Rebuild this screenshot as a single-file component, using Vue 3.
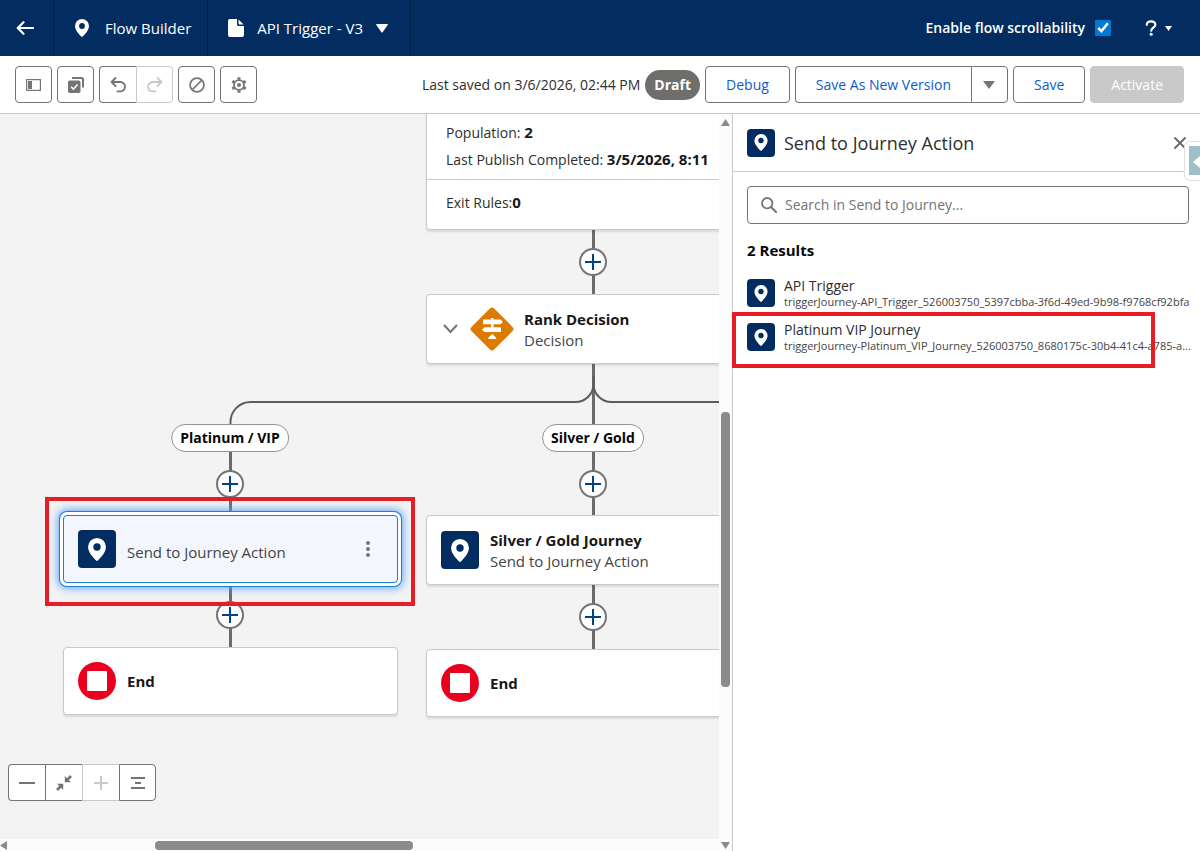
<template>
  <div class="builder">
    <svg class="sprite" aria-hidden="true">
      <symbol id="pin" viewBox="0 0 14 18">
        <path fill-rule="evenodd" d="M7 0a7 7 0 0 0-7 7c0 4.300 4.400 8.600 6.300 10.600.4.500 1 .5 1.400 0C9.600 15.600 14 11.300 14 7a7 7 0 0 0-7-7zm0 9.900a2.900 2.900 0 1 1 0-5.800 2.900 2.900 0 0 1 0 5.800z" />
      </symbol>
    </svg>

    <header class="topbar">
      <a class="topbar-cell back" href="#" aria-label="Back">
        <svg width="18" height="14" viewBox="0 0 18 14"><path d="M17 7H2M7.500 1.200 1.700 7l5.800 5.800" fill="none" stroke="#fff" stroke-width="2.200" stroke-linecap="round" stroke-linejoin="round" /></svg>
      </a>
      <div class="topbar-cell app-name">
        <svg width="14" height="18" fill="#fff"><use href="#pin" /></svg>
        <span>Flow Builder</span>
      </div>
      <button class="topbar-cell flow-name" type="button">
        <svg width="16" height="18" viewBox="0 0 16 18" fill="#fff"><path d="M2 0h7v5.500C9 6.400 9.600 7 10.500 7H16v9a2 2 0 0 1-2 2H2a2 2 0 0 1-2-2V2C0 .9.900 0 2 0z" /><path d="M10.500.5 15.500 5.500h-4a1 1 0 0 1-1-1z" /></svg>
        <span>API Trigger - V3</span>
        <svg width="12" height="9" viewBox="0 0 12 9" fill="#fff"><path d="M.8 0h10.400c.6 0 .9.600.5 1.100L6.600 8.300c-.3.400-.9.400-1.200 0L.3 1.100C-.1.600.2 0 .8 0z" /></svg>
      </button>
      <div class="topbar-right">
        <label class="scroll-toggle">
          Enable flow scrollability
          <input v-model="scrollable" type="checkbox" />
        </label>
        <button class="help" type="button" aria-label="Help">
          <svg width="12" height="16" viewBox="0 0 12 16"><path d="M1.800 4.800C1.800 2.600 3.500 1.300 6 1.300s4.300 1.400 4.300 3.400c0 3-4.100 2.800-4.100 6" fill="none" stroke="#fff" stroke-width="2.200" stroke-linecap="round" /><circle cx="6.200" cy="14.300" r="1.500" fill="#fff" /></svg>
          <svg width="7" height="5" viewBox="0 0 7 5" fill="#fff"><path d="M0 0h7L3.500 5z" /></svg>
        </button>
      </div>
    </header>

    <div class="toolbar">
      <button class="icon-btn" type="button" aria-label="Toggle toolbox">
        <svg width="15" height="12" viewBox="0 0 15 12"><rect x=".6" y=".6" width="13.800" height="10.800" fill="none" stroke="#747474" stroke-width="1.200" /><path d="M2 2h4v8H2z" fill="#747474" /></svg>
      </button>
      <button class="icon-btn" type="button" aria-label="Select elements">
        <svg width="16" height="16" viewBox="0 0 16 16"><path d="M4.500 0h9.300C15 0 16 1 16 2.200v8.300h-2V2.600a.6.600 0 0 0-.6-.6H4V.5c0-.3.200-.5.500-.5z" fill="#747474" /><rect y="3.500" width="12.500" height="12.500" rx="1.800" fill="#747474" /><path d="m3.200 9.900 2.300 2.300 4-4.600" fill="none" stroke="#fff" stroke-width="1.500" /></svg>
      </button>
      <div class="btn-group">
        <button class="icon-btn" type="button" aria-label="Undo">
          <svg width="16" height="16" viewBox="0 0 16 16"><path d="M1.500 5h8.800a4.700 4.700 0 1 1 0 9.400H7.500M5.500 1 1.500 5l4 4" fill="none" stroke="#747474" stroke-width="1.800" stroke-linecap="round" stroke-linejoin="round" /></svg>
        </button>
        <button class="icon-btn" type="button" aria-label="Redo" disabled>
          <svg width="16" height="16" viewBox="0 0 16 16"><path d="M14.500 5H5.700a4.700 4.700 0 1 0 0 9.400h2.800M10.500 1l4 4-4 4" fill="none" stroke="#c9c9c9" stroke-width="1.800" stroke-linecap="round" stroke-linejoin="round" /></svg>
        </button>
      </div>
      <button class="icon-btn" type="button" aria-label="Skip">
        <svg width="16" height="16" viewBox="0 0 16 16"><path d="M3 13 13 3" stroke="#747474" stroke-width="1.700" /><circle cx="8" cy="8" r="6.900" fill="none" stroke="#747474" stroke-width="1.700" /></svg>
      </button>
      <button class="icon-btn" type="button" aria-label="Settings">
        <svg width="16" height="16" viewBox="0 0 16 16" fill="none" stroke="#747474"><path d="M8 .3v2.500M8 13.200v2.500M1.300 4.200l2.200 1.200M12.500 10.600l2.200 1.200M1.300 11.800l2.200-1.200M12.500 5.400l2.200-1.200" stroke-width="3" /><circle cx="8" cy="8" r="4.900" stroke-width="1.800" /><circle cx="8" cy="8" r="2" fill="#747474" stroke="none" /></svg>
      </button>

      <div class="toolbar-right">
        <span>Last saved on 3/6/2026, 02:44 PM</span>
        <span class="badge">Draft</span>
        <button class="btn" type="button">Debug</button>
        <div class="btn-group">
          <button class="btn" type="button">Save As New Version</button>
          <button class="icon-btn" type="button" aria-label="More save options">
            <svg width="12" height="8" viewBox="0 0 12 8" fill="#747474"><path d="M0 0h12L6 8z" /></svg>
          </button>
        </div>
        <button class="btn" type="button">Save</button>
        <button class="btn activate" type="button" disabled>Activate</button>
      </div>
    </div>

    <main class="workspace">
      <section class="canvas-wrap">
        <div class="canvas">
          <svg class="connectors" width="1000" height="640" fill="none">
            <path stroke="#6b6b6b" stroke-width="3" d="M593.500 116v64M593.500 250v285M230.500 330v203" />
            <path stroke="#5c5c5c" stroke-width="2" d="M593.500 262v8a18 18 0 0 1-18 18h-325a20 20 0 0 0-20 20v4M593.500 262v8a18 18 0 0 0 18 18h360" />
          </svg>

          <div class="card start-card">
            <div class="start-section">
              <p>Population: <b>2</b></p>
              <p>Last Publish Completed: <b>3/5/2026, 8:11</b></p>
            </div>
            <div class="start-section">
              <p>Exit Rules:<b>0</b></p>
            </div>
          </div>

          <div
            v-for="node in nodes"
            :key="node.id"
            class="card node"
            :class="[node.type, { selected: node.selected }]"
            :style="{ left: `${node.x}px`, top: `${node.y}px` }"
          >
            <button v-if="node.type === 'decision'" class="collapse" type="button" aria-label="Collapse">
              <svg width="15" height="10" viewBox="0 0 15 10"><path d="m1.500 1.500 6 6.500 6-6.500" fill="none" stroke="#747474" stroke-width="2" stroke-linecap="round" /></svg>
            </button>
            <svg v-if="node.type === 'decision'" width="46" height="46" viewBox="0 0 46 46">
              <rect x="7" y="7" width="32" height="32" rx="3" fill="#dd7a01" transform="rotate(45 23 23)" />
              <path d="M14 14.500c0-.6.400-1 1-1h7V12h2.500v1.500h7l2.500 2.400-2.500 2.400H15c-.6 0-1-.4-1-1zM32 22.300c0-.6-.4-1-1-1H15.500L13 23.700l2.500 2.400H31c.6 0 1-.4 1-1zM22 18.300h2.500v3H22zM22 28.500h2.500c0 2 2.700 1.700 2.700 4.500h-8c0-2.800 2.800-2.500 2.800-4.500z" fill="#fff" />
            </svg>
            <svg v-else-if="node.type === 'end'" width="38" height="38" viewBox="0 0 38 38">
              <circle cx="19" cy="19" r="19" fill="#ea001e" />
              <rect x="9" y="9" width="20" height="20" rx="1" fill="#fff" />
            </svg>
            <span v-else class="tile"><svg width="18" height="23" fill="#fff"><use href="#pin" /></svg></span>
            <div class="node-text">
              <strong v-if="node.title">{{ node.title }}</strong>
              <span v-if="node.subtitle">{{ node.subtitle }}</span>
            </div>
            <button v-if="node.selected" class="node-menu" type="button" aria-label="Element actions">
              <i></i><i></i><i></i>
            </button>
          </div>

          <span
            v-for="label in labels"
            :key="label.text"
            class="path-label"
            :style="{ left: `${label.x}px`, top: `${label.y}px` }"
          >{{ label.text }}</span>

          <button
            v-for="(add, i) in addButtons"
            :key="i"
            class="add"
            type="button"
            aria-label="Add element"
            :style="{ left: `${add.x}px`, top: `${add.y}px` }"
          >
            <svg width="16" height="16" viewBox="0 0 16 16"><path d="M8 0v16M0 8h16" stroke="#014486" stroke-width="2" /></svg>
          </button>

          <div class="zoom-controls btn-group">
            <button class="icon-btn" type="button" aria-label="Zoom out">
              <svg width="16" height="16"><path d="M0 8h16" stroke="#747474" stroke-width="2" /></svg>
            </button>
            <button class="icon-btn" type="button" aria-label="Zoom to fit">
              <svg width="16" height="16" viewBox="0 0 16 16" stroke="#747474" fill="#747474"><path d="m15 1-4 4M1 15l4-4" stroke-width="2.600" /><path d="M8.800 1v6.200H15zM1 8.800h6.200V15z" stroke="none" /></svg>
            </button>
            <button class="icon-btn" type="button" aria-label="Zoom in" disabled>
              <svg width="16" height="16"><path d="M8 1v14M1 8h14" stroke="#c9c9c9" stroke-width="2" /></svg>
            </button>
            <button class="icon-btn" type="button" aria-label="Toggle layout">
              <svg width="16" height="14"><path d="M1 2h14M5 7h6M1 12h14" stroke="#747474" stroke-width="2" /></svg>
            </button>
          </div>
        </div>

        <div class="track vertical">
          <svg width="9" height="7" viewBox="0 0 9 7"><path d="M4.500 0 9 7H0z" fill="#8b8b8b" /></svg>
          <div class="track-body"><div class="thumb"></div></div>
          <svg width="9" height="7" viewBox="0 0 9 7"><path d="M4.500 7 0 0h9z" fill="#8b8b8b" /></svg>
        </div>
        <div class="track horizontal">
          <svg width="7" height="9" viewBox="0 0 7 9"><path d="M0 4.500 7 0v9z" fill="#8b8b8b" /></svg>
          <div class="track-body"><div class="thumb"></div></div>
        </div>
      </section>

      <aside class="panel">
        <div class="panel-head">
          <span class="tile small"><svg width="14" height="17" fill="#fff"><use href="#pin" /></svg></span>
          <h2>Send to Journey Action</h2>
          <button class="close" type="button" aria-label="Close">
            <svg width="12" height="12"><path d="m1 1 10 10M11 1 1 11" stroke="#666" stroke-width="1.800" stroke-linecap="round" /></svg>
          </button>
        </div>
        <div class="panel-body">
          <div class="search">
            <svg width="16" height="16" viewBox="0 0 16 16"><circle cx="6.200" cy="6.200" r="5.200" fill="none" stroke="#747474" stroke-width="1.800" /><path d="m10 10 5 5" stroke="#747474" stroke-width="2" stroke-linecap="round" /></svg>
            <input type="search" aria-label="Search in Send to Journey" placeholder="Search in Send to Journey..." />
          </div>
          <h3>2 Results</h3>
          <ul>
            <li v-for="item in results" :key="item.name">
              <span class="tile small"><svg width="14" height="17" fill="#fff"><use href="#pin" /></svg></span>
              <div class="result">
                <a href="#">{{ item.name }}</a>
                <small>{{ item.api }}</small>
              </div>
            </li>
          </ul>
        </div>
      </aside>

      <div class="side-tab">
        <svg width="11" height="29" viewBox="0 0 11 29"><path d="M0 0h11v29H0z" fill="#9fc0c9" /><path d="m4 16 7-6v12z" fill="#fff" /></svg>
      </div>
      <div class="highlight on-node"></div>
      <div class="highlight on-result"></div>
    </main>
  </div>
</template>

<script setup>
import { ref } from 'vue';

const scrollable = ref(true);

const nodes = [
  { id: 'rank', type: 'decision', x: 426, y: 180, title: 'Rank Decision', subtitle: 'Decision' },
  { id: 'platinum', type: 'journey', x: 63, y: 401, subtitle: 'Send to Journey Action', selected: true },
  { id: 'silver', type: 'journey', x: 426, y: 401, title: 'Silver / Gold Journey', subtitle: 'Send to Journey Action' },
  { id: 'end-platinum', type: 'end', x: 63, y: 533, title: 'End' },
  { id: 'end-silver', type: 'end', x: 426, y: 535, title: 'End' }
];

const labels = [
  { text: 'Platinum / VIP', x: 230, y: 324 },
  { text: 'Silver / Gold', x: 593, y: 324 }
];

const addButtons = [
  { x: 593, y: 148 },
  { x: 230, y: 370 },
  { x: 593, y: 370 },
  { x: 230, y: 501 },
  { x: 593, y: 503 }
];

const results = [
  { name: 'API Trigger', api: 'triggerJourney-API_Trigger_526003750_5397cbba-3f6d-49ed-9b98-f9768cf92bfa' },
  { name: 'Platinum VIP Journey', api: 'triggerJourney-Platinum_VIP_Journey_526003750_8680175c-30b4-41c4-a785-a...' }
];
</script>

<style>
body {
  margin: 0;
  overflow: hidden;
}
</style>

<style scoped>
* {
  box-sizing: border-box;
}

.builder {
  display: flex;
  flex-direction: column;
  height: 100vh;
  background: #fff;
  color: #2e2e2e;
  font-family: "Segoe UI", "Open Sans", sans-serif;
  font-size: 14px;
  line-height: 20px;
}

.sprite {
  display: none;
}

svg {
  flex: none;
  display: block;
}

button,
input {
  font: inherit;
  color: inherit;
}

button {
  display: flex;
  align-items: center;
  justify-content: center;
  padding: 0;
  border: 0;
  background: none;
}

h2,
h3,
p,
ul {
  margin: 0;
  padding: 0;
}

/* top bar */
.topbar {
  display: flex;
  flex: none;
  height: 56px;
  background: #032d60;
  color: #fff;
  font-size: 15px;
}

.topbar-cell {
  display: flex;
  align-items: center;
  border-right: 1px solid #021d42;
}

.back {
  width: 54px;
  padding-left: 16px;
}

.app-name {
  gap: 16px;
  padding: 0 16px 0 21px;
}

.flow-name {
  gap: 13px;
  padding: 0 22px 0 20px;
}

.topbar-right {
  display: flex;
  align-items: center;
  gap: 34px;
  margin-left: auto;
  padding-right: 28px;
}

.scroll-toggle {
  display: flex;
  align-items: center;
  gap: 10px;
  font-size: 14px;
  font-weight: 600;
}

.scroll-toggle input {
  width: 16px;
  height: 16px;
  margin: 0;
  accent-color: #0078d4;
}

.help {
  gap: 8px;
}

/* toolbar */
.toolbar {
  display: flex;
  flex: none;
  align-items: center;
  gap: 5px;
  height: 58px;
  padding: 0 16px 0 15px;
  border-bottom: 1px solid #c9c9c9;
}

.toolbar-right {
  display: flex;
  align-items: center;
  gap: 5px;
  margin-left: auto;
}

.icon-btn,
.btn {
  height: 37px;
  border: 1px solid #747474;
  border-radius: 4px;
  background: #fff;
}

.icon-btn {
  width: 37px;
}

.icon-btn:disabled {
  border-color: #c9c9c9;
}

.btn {
  padding: 0 20px;
  color: #0b5cd0;
}

.btn.activate {
  border-color: #c9c9c9;
  background: #c9c9c9;
  color: #fff;
}

.btn-group {
  display: flex;
}

.btn-group > :not(:first-child) {
  border-top-left-radius: 0;
  border-bottom-left-radius: 0;
}

.btn-group > :not(:last-child) {
  border-right: 0;
  border-top-right-radius: 0;
  border-bottom-right-radius: 0;
}

.badge {
  padding: 5px 9px;
  border-radius: 16px;
  background: #706e6b;
  color: #fff;
  font-weight: 700;
}

/* workspace */
.workspace {
  position: relative;
  display: flex;
  flex: 1;
  min-height: 0;
  overflow: hidden;
}

.canvas-wrap {
  display: grid;
  flex: 1;
  grid-template: 1fr 12px / 1fr 13px;
  min-width: 0;
}

.canvas {
  position: relative;
  overflow: hidden;
  background: #f3f3f3;
}

.connectors {
  position: absolute;
  top: 0;
  left: 0;
}

.card {
  position: absolute;
  width: 335px;
  border: 1px solid #c9c9c9;
  border-radius: 4px;
  background: #fff;
  box-shadow: 0 2px 2px rgba(0, 0, 0, 0.1);
  font-size: 15px;
}

.start-card {
  top: -8px;
  left: 426px;
  font-size: 14px;
  white-space: nowrap;
}

.start-section {
  padding: 12px 19px 6px;
}

.start-section p {
  line-height: 27px;
}

.start-section + .start-section {
  padding: 9px 19px 13px;
  border-top: 1px solid #c9c9c9;
}

b {
  color: #181818;
  font-size: 15px;
}

.node {
  display: flex;
  align-items: center;
  gap: 11px;
  height: 70px;
  padding: 0 14px;
}

.node.end {
  height: 68px;
}

.node.decision {
  gap: 9px;
  padding-left: 13px;
}

.collapse {
  width: 20px;
  height: 20px;
}

.node-text {
  display: flex;
  flex: 1;
  flex-direction: column;
  padding-top: 2px;
  line-height: 21px;
  color: #444;
}

.node-text strong {
  color: #181818;
  font-size: 15px;
}

.end .node-text {
  padding-top: 0;
}

.node.selected {
  height: 68px;
  background: #f3f6fc;
  border-color: #1b7fd1;
  box-shadow: 0 0 0 3px #fff, 0 0 0 4px #1b7fd1, 0 0 8px 5px #57a3fd;
}

.selected .node-text {
  padding-top: 6px;
}

.node-menu {
  flex-direction: column;
  gap: 2px;
  width: 30px;
}

.node-menu i {
  width: 4px;
  height: 4px;
  border-radius: 50%;
  background: #747474;
}

.tile {
  display: flex;
  flex: none;
  align-items: center;
  justify-content: center;
  width: 38px;
  height: 38px;
  border-radius: 4px;
  background: #032d60;
}

.tile.small {
  width: 28px;
  height: 28px;
}

.path-label {
  position: absolute;
  padding: 0 8px;
  border: 1px solid #939393;
  border-radius: 14px;
  background: #fff;
  color: #080707;
  font-size: 14px;
  font-weight: 700;
  line-height: 26px;
  white-space: nowrap;
  transform: translate(-50%, -50%);
}

.add {
  position: absolute;
  width: 28px;
  height: 28px;
  border: 2px solid #747474;
  border-radius: 50%;
  background: #fff;
  transform: translate(-50%, -50%);
}

.zoom-controls {
  position: absolute;
  bottom: 38px;
  left: 8px;
}

/* scrollbars */
.track {
  display: flex;
  align-items: center;
  background: #fcfcfc;
}

.track-body {
  flex: 1;
}

.thumb {
  border-radius: 4px;
  background: #8b8b8b;
}

.vertical {
  grid-row: 1 / 3;
  grid-column: 2;
  flex-direction: column;
  padding: 5px 0 2px;
}

.vertical .track-body {
  display: grid;
  grid-template-rows: 286fr 275fr 155fr;
}

.vertical .thumb {
  grid-row: 2;
  width: 9px;
}

.horizontal {
  grid-row: 2;
  grid-column: 1;
}

.horizontal .track-body {
  display: grid;
  grid-template-columns: 148fr 258fr 306fr;
}

.horizontal .thumb {
  grid-column: 2;
  height: 9px;
}

/* action panel */
.panel {
  flex: none;
  width: 39%;
  border-left: 1px solid #c9c9c9;
  overflow: hidden;
}

.panel-head {
  display: flex;
  align-items: center;
  gap: 9px;
  height: 58px;
  padding: 0 14px;
  border-bottom: 1px solid #c9c9c9;
}

.panel-head h2 {
  font-size: 18px;
  font-weight: 400;
  line-height: 24px;
}

.close {
  margin-left: auto;
}

.panel-body {
  padding: 14px 0 0 14px;
}

.search {
  display: flex;
  align-items: center;
  gap: 8px;
  height: 38px;
  margin-right: 11px;
  padding: 0 14px 0 13px;
  border: 1px solid #747474;
  border-radius: 4px;
}

.search input {
  flex: 1;
  min-width: 0;
  padding: 0;
  border: 0;
  outline: 0;
  background: none;
}

.search input::placeholder {
  color: #747474;
}

h3 {
  padding: 14px 0 9px;
  color: #080707;
  font-size: 15px;
  line-height: 24px;
}

ul {
  list-style: none;
}

li {
  display: flex;
  align-items: center;
  gap: 9px;
  height: 44px;
}

.result {
  display: flex;
  flex-direction: column;
  white-space: nowrap;
}

.result a {
  color: #2e2e2e;
  line-height: 17px;
  text-decoration: none;
}

.result small {
  color: #444;
  font-size: 11px;
  line-height: 16px;
}

.side-tab {
  position: absolute;
  top: 27px;
  right: 0;
  padding: 4px 0 5px 4px;
  border: 1px solid #e0e0e0;
  border-right: 0;
  border-radius: 6px 0 0 6px;
  background: #fff;
}

/* callouts over the canvas and the panel */
.highlight {
  position: absolute;
  border: 4px solid #e81c24;
  pointer-events: none;
}

.on-node {
  top: 383px;
  left: 45px;
  width: 370px;
  height: 109px;
}

.on-result {
  top: 198px;
  right: 45px;
  width: 423px;
  height: 56px;
}
</style>
